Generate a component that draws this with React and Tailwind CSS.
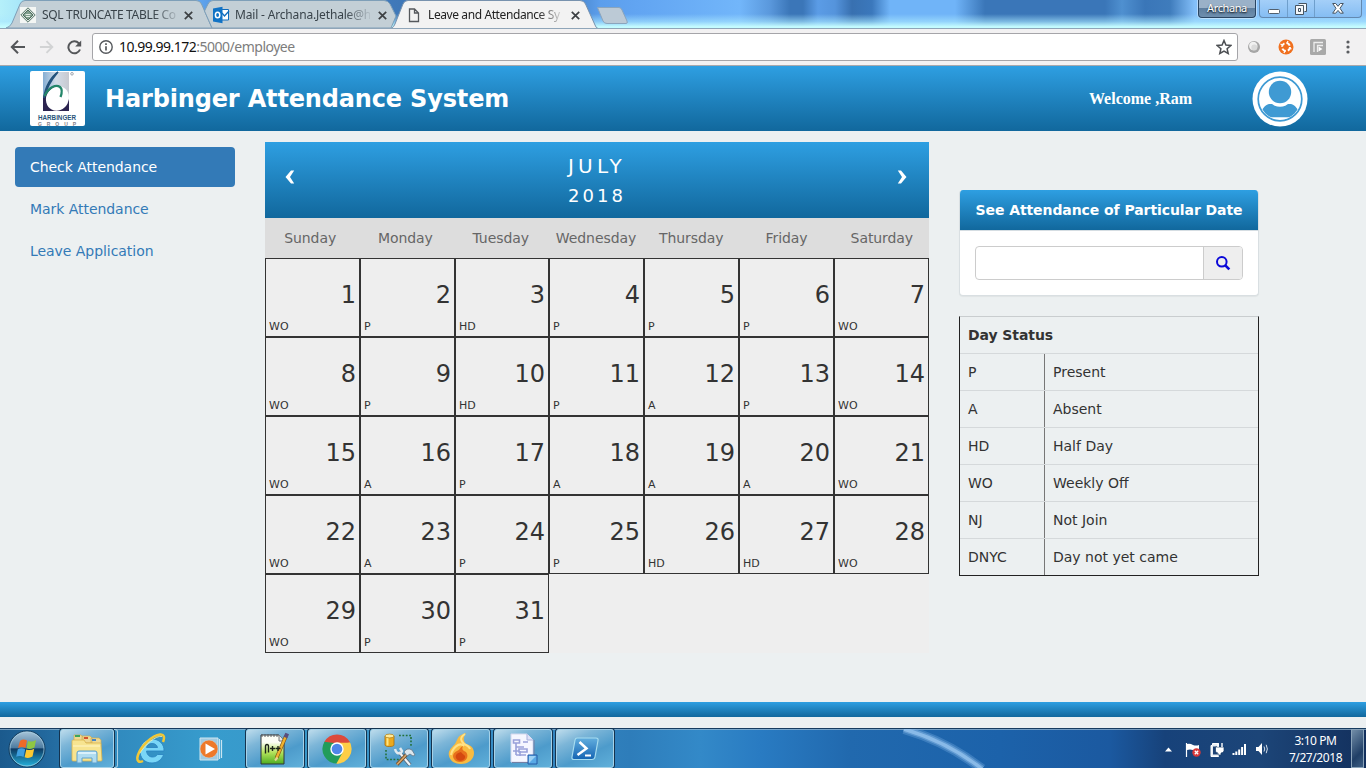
import React from "react";

const VERDANA = "font-['DejaVu_Sans',sans-serif]";

const WEEKDAYS = ["Sunday", "Monday", "Tuesday", "Wednesday", "Thursday", "Friday", "Saturday"];
const CODES = [
  "WO", "P", "HD", "P", "P", "P", "WO",
  "WO", "P", "HD", "P", "A", "P", "WO",
  "WO", "A", "P", "A", "A", "A", "WO",
  "WO", "A", "P", "P", "HD", "HD", "WO",
  "WO", "P", "P",
];
const STATUSES = [
  ["P", "Present"],
  ["A", "Absent"],
  ["HD", "Half Day"],
  ["WO", "Weekly Off"],
  ["NJ", "Not Join"],
  ["DNYC", "Day not yet came"],
];

function TabClose() {
  return (
    <svg className="size-[9px] shrink-0" viewBox="0 0 9 9">
      <path d="M.8.8 8.2 8.2M8.2.8.8 8.2" stroke="#3c4043" strokeWidth="1.7" />
    </svg>
  );
}

function Tab({ width, path, w, fill, stroke, children }) {
  return (
    <div className={`relative isolate h-[28px] shrink-0 ${width}`}>
      <svg className="absolute inset-0 -z-10" width={w} height="28" viewBox={`0 0 ${w} 28`}>
        <path d={path} fill={fill} stroke={stroke} />
      </svg>
      <div className="flex h-[29px] items-center pt-px">{children}</div>
    </div>
  );
}

function TabTitle({ className, children }) {
  return (
    <span
      className={`font-['Noto_Sans',sans-serif] text-[12px] leading-[18px] whitespace-nowrap [mask-image:linear-gradient(to_right,#000_82%,transparent_102%)] ${className}`}
    >
      {children}
    </span>
  );
}

function TitleBar() {
  return (
    <div className="relative isolate flex h-[29px] shrink-0 overflow-hidden bg-[linear-gradient(to_right,#b5f0fa_0,#8fd4f6_60px,#6fb4f4_160px,#5fa4ee_200px,#4f90dc_225px,#3f78b8_400px,#3f78b8_560px,#5c9eec_600px,#62a5f2_640px,#72b6fa_740px,#5a98dc_770px,#3b76b8_790px,#3b76b8_803px,#5b9ce6_818px,#5594dc_835px,#3870b0_852px,#3b78bc_872px,#70b4f8_890px,#70b4f8_955px,#3a76b8_985px,#3a76b8_1105px,#4f90d0_1122px,#3a76b8_1145px,#3f7cbc_1170px,#84c0fa_1195px,#8ac4fc_1366px)]">
      <div className="absolute inset-x-0 bottom-0 -z-20 h-[15px] bg-[linear-gradient(to_bottom,rgba(170,225,255,0),rgba(170,232,255,0.6)_50%,#c4fcff_85%)]" />
      <div className="w-[6px] shrink-0" />
      <Tab width="w-[206px]" w={206} path="M0 28 Q4 27 6 23 L14 4 Q15.500 .5 19 .5 H190 Q194 .5 195.500 4 L206 28Z" fill="#c3cfd6" stroke="#7e9fb8">
        <svg className="ml-[14px] size-4 shrink-0" viewBox="0 0 16 16">
          <path fill="#f3f6f4" d="M0 0h16v16H0z" />
          <path d="M8 .8 15.200 8 8 15.200.8 8Z" fill="#dce4df" stroke="#57776a" />
          <path d="M8 3 13 8 8 13 3 8Z" fill="#809e8d" stroke="#4d6e5e" />
          <path d="M5.500 7.500h5M6 9.500h4" stroke="#e2ece5" />
        </svg>
        <TabTitle className="ml-[6px] w-[136px] tracking-[-0.32px] text-[#39434a]">SQL TRUNCATE TABLE Co</TabTitle>
        <span className="ml-[6px] flex"><TabClose /></span>
      </Tab>
      <Tab width="-ml-[9px] w-[197px]" w={197} path="M9 28 L1.500 11 L5 4 Q6.500 .5 10 .5 H181 Q185 .5 187 4 L193 16 L188 28Z" fill="#c3cfd6" stroke="#7e9fb8">
        <svg className="ml-[9px] size-[18px] shrink-0" viewBox="0 0 18 18">
          <path d="M8 3.500h8.500v10.500H8z" fill="#fff" stroke="#0f6cbd" />
          <path d="m10 7 2.500 3 4.500-5" fill="none" stroke="#0f6cbd" strokeWidth="1.300" />
          <path d="M1 2.500 10.500 .8v16.400L1 15.500Z" fill="#1173c5" />
          <ellipse cx="5.600" cy="9" rx="2.200" ry="2.800" fill="none" stroke="#fff" strokeWidth="1.500" />
        </svg>
        <TabTitle className="ml-[5px] w-[135px] tracking-[-0.17px] text-[#39434a]">Mail - Archana.Jethale@h</TabTitle>
        <span className="ml-[8px] flex"><TabClose /></span>
      </Tab>
      <Tab width="-ml-[9px] w-[207px]" w={207} path="M0 28.500 Q3 27 4 24 L12 4 Q13.500 .5 17 .5 H189 Q193 .5 194.500 4 L204 25 Q205 28 207 28.500Z" fill="#f2f2f2" stroke="#7892ae">
        <svg className="ml-[17px] h-[15px] w-[12px] shrink-0" viewBox="0 0 12 15">
          <path d="M1.500 1h5l4 4v8.500h-9ZM6.500 1v4h4" fill="none" stroke="#55585c" strokeWidth="1.300" />
        </svg>
        <TabTitle className="ml-[8px] w-[134px] tracking-[-0.4px] text-[#222]">Leave and Attendance Sy</TabTitle>
        <span className="ml-[9px] flex"><TabClose /></span>
      </Tab>
      <svg className="-ml-[3px] h-[28px] w-[36px] shrink-0" viewBox="0 0 36 28">
        <path d="M2.500 7.500H24Q26 7.500 27 10L32 21Q33 23.500 31 23.500H12Q9 23.500 8 21Z" fill="#bccad6" stroke="#8ba5bd" />
      </svg>
      <div className="ml-auto flex h-[18px] pr-[4px]">
        <div className="flex h-[18px] w-[58px] items-center justify-center rounded-b-[4px] border border-t-0 border-[#2a4562] bg-[linear-gradient(#9ab1c8_0_45%,#5f7f9f_50%,#6e8fae)] font-['Noto_Sans',sans-serif] text-[11px] tracking-[-0.4px] text-white ring-1 ring-white/40 [text-shadow:0_1px_2px_#000]">
          Archana
        </div>
        <div className="ml-[3px] flex h-[18px] w-[103px] rounded-b-[4px] border border-t-0 border-[#6389b0] bg-linear-to-b from-[#a4cff8] to-[#85bdf3]">
          <div className="flex w-[28px] items-center justify-center border-r border-[#6f9fcc]">
            <svg className="h-[16px] w-[14px]" viewBox="0 0 14 16"><rect x="1.500" y="8.500" width="11" height="4" rx="1" fill="#fff" stroke="#52606e" /></svg>
          </div>
          <div className="flex w-[27px] items-center justify-center border-r border-[#6f9fcc]">
            <svg className="size-[12px]" viewBox="0 0 12 12">
              <path d="M3.500.5h8v8h-2M.5 2.500h8v9h-8ZM3.500 5.500h2v3h-2Z" fill="#f4f8fc" stroke="#465462" />
            </svg>
          </div>
          <div className="flex flex-1 items-center justify-center">
            <svg className="h-[11px] w-[12px]" viewBox="0 0 12 11">
              <path d="M.7.500h3l2.300 2.800L8.300.5h3L8 5.300l3.300 4.900h-3L6 7.400l-2.300 2.800h-3L4 5.300Z" fill="#fff" stroke="#465462" />
            </svg>
          </div>
        </div>
      </div>
      <div className="absolute inset-x-0 bottom-0 -z-10 h-px bg-[#8fa5b8]" />
    </div>
  );
}

function Toolbar() {
  return (
    <div className="flex h-[37px] shrink-0 items-center border-b border-[#a8a8ac] bg-[#f2f1f2]">
      <svg className="ml-[10px] h-[16px] w-[16px]" viewBox="0 0 16 16">
        <path d="M15 8H2.500M8 1.800 1.800 8 8 14.200" fill="none" stroke="#545659" strokeWidth="2" />
      </svg>
      <svg className="ml-[13px] h-[16px] w-[15px]" viewBox="0 0 16 16">
        <path d="M1 8h12.500M8 1.800 14.200 8 8 14.200" fill="none" stroke="#d2d3d4" strokeWidth="2" />
      </svg>
      <svg className="ml-[13px] size-[15px]" viewBox="0 0 15 15">
        <path d="M13 9.500A6 6 0 1 1 11.800 3.200L13 4.500" fill="none" stroke="#545659" strokeWidth="2" />
        <path d="M14.200.5V6.500H8.200Z" fill="#545659" />
      </svg>
      <div className="ml-[10px] flex h-[28px] w-[1146px] items-center rounded-[3px] border border-[#a5a5a9] bg-white">
        <svg className="ml-[6px] size-[14px]" viewBox="0 0 14 14">
          <circle cx="7" cy="7" r="6.200" fill="none" stroke="#55585c" strokeWidth="1.400" />
          <path d="M7 6.200V10.600M7 3.300V5" stroke="#55585c" strokeWidth="1.700" />
        </svg>
        <span className="ml-[6px] font-['Noto_Sans',sans-serif] text-[14px] leading-5 tracking-[-0.5px] text-[#111]">
          10.99.99.172<span className="text-[#7d7d7d]">:5000/employee</span>
        </span>
        <svg className="mr-[5px] ml-auto size-[16px]" viewBox="0 0 16 16">
          <path d="m8 1.500 1.900 4.600 4.900.4-3.700 3.200 1.100 4.800L8 12l-4.200 2.500 1.100-4.800L1.200 6.500l4.900-.4Z" fill="none" stroke="#4c4f53" strokeWidth="1.500" />
        </svg>
      </div>
      <svg className="ml-[9px] size-[14px]" viewBox="0 0 14 14">
        <circle cx="7" cy="7" r="6" fill="#a6a6a6" />
        <circle cx="6.300" cy="6" r="4.200" fill="#f1f1f1" />
        <circle cx="7.300" cy="7.400" r="3" fill="#dadada" />
      </svg>
      <svg className="ml-[17px] size-[16px]" viewBox="0 0 16 16">
        <circle cx="8" cy="8" r="7.500" fill="#f0701f" />
        <circle cx="8" cy="8" r="4" fill="none" stroke="#fff" strokeWidth="2" strokeDasharray="4.200 2.080" />
        <path d="m2.500 5 2 1M10 2l-1 2M13.500 10l-2-.8M6 14l.8-2" stroke="#fff" strokeWidth="1.200" />
      </svg>
      <svg className="ml-[16px] size-[16px]" viewBox="0 0 16 16">
        <rect width="16" height="16" rx="1.500" fill="#a9a9a9" />
        <path d="M4 13V3.500h9M7.500 13V6.500h5.500" fill="none" stroke="#eee" strokeWidth="1.300" />
        <path d="M8.500 7.500 12.500 10l-4 2.500Z" fill="#fff" />
      </svg>
      <svg className="ml-[20px] h-[14px] w-[4px]" viewBox="0 0 4 14" fill="#5a5c60">
        <circle cx="2" cy="2" r="1.600" /><circle cx="2" cy="7" r="1.600" /><circle cx="2" cy="12" r="1.600" />
      </svg>
    </div>
  );
}

function Logo() {
  return (
    <svg className="ml-[30px] h-[55px] w-[55px] rounded-[2px]" viewBox="0 0 55 55">
      <defs>
        <linearGradient id="logo-bg" x1="0" y1="0" x2="1" y2="0">
          <stop offset="0" stopColor="#86aed3" /><stop offset=".5" stopColor="#d3dde8" /><stop offset="1" stopColor="#c7c9d0" />
        </linearGradient>
      </defs>
      <path fill="#fff" d="M0 0h55v55H0z" />
      <path fill="url(#logo-bg)" d="M13 1h26v39H13z" />
      <path d="M13 40V27C14 21 18 17 24 16L39 28V40Z" fill="#2c2450" />
      <ellipse cx="27.500" cy="27.500" rx="11.300" ry="12.500" fill="#fff" transform="rotate(28 27.500 27.500)" />
      <path d="M28 1C21 6 15 16 14 27C16 18 22 8 28 1Z" fill="#24537c" stroke="#24537c" strokeWidth="1.600" />
      <path d="M14.500 25C19 16 26 13 30 16C32.500 18 32 22 30.500 26" fill="none" stroke="#24866a" strokeWidth="2.300" />
      <circle cx="42" cy="2.800" r="1.300" fill="none" stroke="#7a8290" strokeWidth=".7" />
      <text x="8" y="48.500" textLength="38" lengthAdjust="spacingAndGlyphs" fontFamily="Liberation Sans, sans-serif" fontSize="7" fontWeight="700" fill="#285379">HARBINGER</text>
      <text x="8" y="54.800" textLength="38" fontFamily="Liberation Sans, sans-serif" fontSize="5" fontWeight="700" fill="#858087">GROUP</text>
    </svg>
  );
}

function Avatar() {
  return (
    <svg className="size-[56px]" viewBox="0 0 56 56">
      <defs><clipPath id="avatar-disc"><circle cx="28" cy="28" r="20.500" /></clipPath></defs>
      <circle cx="28" cy="28" r="27.500" fill="#fff" />
      <circle cx="28" cy="28" r="21.800" fill="none" stroke="#3f9ad3" strokeWidth="1.700" />
      <g clipPath="url(#avatar-disc)">
        <path d="M7 44C10 38 13 34 17 33H39C43 34 46 38 49 44V48H37V46.500H19V48H7Z" fill="#3f9ad3" />
        <ellipse cx="28" cy="21.500" rx="13.800" ry="14.300" fill="#fff" />
        <path d="M18 47.500h20" stroke="#fff" strokeWidth="1.800" />
      </g>
      <circle cx="28" cy="21" r="11.200" fill="#3f9ad3" />
    </svg>
  );
}

function Header() {
  return (
    <header className="flex h-[65px] shrink-0 items-center bg-linear-to-b from-[#2e9fe2] to-[#11689d]">
      <Logo />
      <h1 className="ml-5 text-[24px] leading-8 font-bold tracking-[-0.16px] text-white">Harbinger Attendance System</h1>
      <span className="ml-auto w-[104px] font-['Liberation_Serif',serif] text-[16px] leading-6 font-bold whitespace-nowrap text-white">Welcome ,Ram</span>
      <span className="mr-[58px] ml-[59px]"><Avatar /></span>
    </header>
  );
}

function Chevron({ d }) {
  return (
    <svg className="h-[18px] w-[12px]" viewBox="0 0 12 18">
      <path d={d} fill="#fff" />
    </svg>
  );
}

function Calendar() {
  return (
    <section className="h-[511px] w-[664px] shrink-0 bg-[#eeeeee]">
      <div className="flex h-[76px] items-center justify-between bg-linear-to-b from-[#2e9fe2] to-[#11689d] pr-[21px] pl-[19px] text-white">
        <span className="pb-[6px]"><Chevron d="M7 2.500h3.200L6 9l4.200 6.500H7L1.500 9Z" /></span>
        <div className="pt-[2px] pl-[2px] text-center">
          <div className="text-[20px] leading-[29px] tracking-[4.200px]">JULY</div>
          <div className="text-[18px] leading-[29px] tracking-[3px]">2018</div>
        </div>
        <span className="pb-[6px]"><Chevron d="M5 2.500H1.800L6 9l-4.200 6.500H5L10.500 9Z" /></span>
      </div>
      <div className="h-[40px] bg-[#dddddd]">
        <div className="-mr-[3px] grid h-full grid-cols-7 items-center text-center text-[14px] text-[#666]">
          {WEEKDAYS.map((day) => (
            <span key={day} className="-ml-[5px] tracking-[-0.08px]">{day}</span>
          ))}
        </div>
      </div>
      <div className="grid grid-cols-[95px_95px_94px_95px_95px_95px_95px]">
        {CODES.map((code, i) => (
          <div key={i} className="flex h-[79px] flex-col border border-[#333] pt-[16px] text-[#333]">
            <div className="pr-[3px] text-right text-[24px] leading-[41px]">{i + 1}</div>
            <div className="pl-[3px] text-[11px] leading-[22px]">{code}</div>
          </div>
        ))}
      </div>
    </section>
  );
}

function SearchPanel() {
  return (
    <div className="overflow-hidden rounded-[4px] border border-t-0 border-[#d9dfe2] bg-white shadow-[0_1px_1px_rgba(0,0,0,0.05)]">
      <div className="flex h-[41px] items-center justify-center border-b border-[#d5dde2] bg-linear-to-b from-[#2e9fe2] to-[#11689d] text-[14px] font-bold tracking-[-0.08px] whitespace-nowrap text-white">
        See Attendance of Particular Date
      </div>
      <div className="p-[15px]">
        <div className="flex h-[34px] overflow-hidden rounded-[4px] border border-[#ccc] bg-white">
          <div className="flex-1" />
          <div className="flex w-[39px] items-center justify-center border-l border-[#ccc] bg-[#eee]">
            <svg className="size-[16px]" viewBox="0 0 16 16" fill="none" stroke="#0b08d8">
              <circle cx="6.800" cy="6.800" r="4.800" strokeWidth="2" />
              <path d="m10.300 10.300 4 4" strokeWidth="2.600" />
            </svg>
          </div>
        </div>
      </div>
    </div>
  );
}

function StatusTable() {
  return (
    <div className="mt-[20px] h-[260px] border border-[#222] border-t-[#c9cdcf] text-[14px] text-[#333]">
      <div className="flex h-[36px] items-center pl-[8px] font-bold tracking-[-0.08px]">Day Status</div>
      {STATUSES.map(([code, label]) => (
        <div key={code} className="flex h-[37px] border-t border-[#d5d9db]">
          <div className="flex w-[85px] items-center border-r border-[#777] pl-[8px]">{code}</div>
          <div className="flex items-center pl-[8px]">{label}</div>
        </div>
      ))}
    </div>
  );
}

function TaskButton({ className = "", children }) {
  return (
    <div className={`flex h-[39px] shrink-0 items-center justify-center rounded-[3px] border border-[#a6d2e8] bg-[linear-gradient(155deg,#bddcec_0,#7db6d8_28%,#4d9bcb_62%,#60b0da)] shadow-[0_0_0_1px_#14334f] ${className}`}>
      {children}
    </div>
  );
}

function StartOrb() {
  return (
    <svg className="ml-[8px] size-[38px] shrink-0" viewBox="0 0 38 38">
      <defs>
        <linearGradient id="orb" x1="0" y1="0" x2="0" y2="1">
          <stop offset="0" stopColor="#a9c6da" /><stop offset=".46" stopColor="#4f7da1" /><stop offset=".5" stopColor="#0d3b64" /><stop offset="1" stopColor="#25b5df" />
        </linearGradient>
      </defs>
      <circle cx="19" cy="19" r="18" fill="url(#orb)" stroke="#123b5c" />
      <circle cx="19" cy="19" r="17" fill="none" stroke="#a9d1e5" strokeOpacity=".7" />
      <path d="M12 11Q15 8.500 19 10.500L17.500 18Q14 16 10 18Z" fill="#ee6a28" />
      <path d="M20 11Q24 12.500 28 10L26.500 17.500Q22.500 20 18.500 18.200Z" fill="#8fc743" />
      <path d="M9.800 19.200Q13.500 17.500 17.200 19.200L15.500 27Q12 25 8.200 26.800Z" fill="#3e9fe0" />
      <path d="M18.300 19.500Q22.500 21 26.200 18.700L24.500 26.500Q20.500 29 16.600 27.200Z" fill="#fbc832" />
    </svg>
  );
}

function ExplorerIcon() {
  return (
    <svg className="h-[32px] w-[34px]" viewBox="0 0 34 32">
      <path d="M4 5V2h7l2 2v5H4ZM12 6V3h8l2 2v5H12ZM21 8V5h8l2 2v5H21Z" fill="#eed994" stroke="#cfae55" strokeWidth=".7" />
      <path d="M5 2h5v2H5Z" fill="#3ca55c" /><path d="M14 4h4v2h-4Z" fill="#d2532e" /><path d="M22 6h4v2h-4Z" fill="#4886c5" />
      <path d="M2 8q0-1 1-1h11l2 3h14q1 0 1 1l1 16q0 1-1 1H3q-1 0-1-1Z" fill="#f7e490" stroke="#d9b24d" strokeWidth=".8" />
      <path d="M3 13h27" stroke="#fff6c8" />
      <path d="M7 30V20q0-2 2-2h16q2 0 2 2v10h-5v-5H12v5Z" fill="#b0dcf0" stroke="#5da1cf" />
      <path d="M8 20h18" stroke="#e9f8ff" strokeWidth="1.500" />
    </svg>
  );
}

function IEIcon() {
  return (
    <svg className="h-[34px] w-[34px]" viewBox="0 0 34 34">
      <path d="M30 19H12.500c.5 4 3 6 6 6 2.500 0 4-1 5-2.500h6.200C27.500 28 23.500 31 18 31 10.500 31 6 26 6 19S11 7 18 7s12.500 5 12 12ZM12.500 15.500h11C23 13 21 11.500 18 11.500s-5 1.500-5.500 4Z" fill="#79d6f7" stroke="#2b86c2" strokeWidth=".9" fillRule="evenodd" />
      <path d="M29 10C31 5 30 2 26 2.500 18 3.500 7 14 4 23c-2 6 1 8 5 6" fill="none" stroke="#f0c737" strokeWidth="2.500" />
      <path d="M28 4.500C22 3 11 13 6 21" fill="none" stroke="#fff1a2" strokeWidth=".8" />
    </svg>
  );
}

function MediaIcon() {
  return (
    <svg className="h-[26px] w-[26px]" viewBox="0 0 26 26">
      <path d="M2 2h18v22H2z" fill="#9fcae2" stroke="#cfe6f0" />
      <path d="M21.500 3v20M23.500 4v18" stroke="#c9e5f2" strokeWidth="1.200" />
      <circle cx="11" cy="13" r="9" fill="#ee792a" stroke="#c9d2d5" strokeWidth=".6" />
      <path d="M7.500 7.500 17 13l-9.500 5.500Z" fill="#fff" />
    </svg>
  );
}

function NotepadIcon() {
  return (
    <svg className="h-[34px] w-[32px]" viewBox="0 0 32 34">
      <defs><linearGradient id="npp" x1="0" y1="0" x2="0" y2="1"><stop offset=".25" stopColor="#fcfdf5" /><stop offset=".6" stopColor="#b4e35c" /><stop offset="1" stopColor="#4ead20" /></linearGradient></defs>
      <path d="M2 3h18l5 6v23H2Z" fill="url(#npp)" stroke="#30363a" />
      <path d="M20 3v6h5" fill="#e7e7e7" stroke="#777" />
      <path d="M3 2v3M6 2v3M9 2v3M12 2v3M15 2v3M18 2v3" stroke="#5a5f63" />
      <path d="M27 4 17.500 26" stroke="#7b4f18" strokeWidth="3.600" /><path d="M27 4 17.500 26" stroke="#efb22f" strokeWidth="2.400" />
      <path d="m28.200 1.500-1.800 4" stroke="#594e7d" strokeWidth="4" /><path d="m18.500 25.500-2.500 3" stroke="#e4cf95" strokeWidth="2" />
      <path d="M6.500 21.500V14.500q0-2 1.500-2t1.500 2v6M13.500 14v5M11 16.500h5M19 14v5M16.500 16.500h5" fill="none" stroke="#1c2518" strokeWidth="1.400" />
    </svg>
  );
}

function ChromeIcon() {
  return (
    <svg className="size-[30px]" viewBox="0 0 30 30">
      <path d="M15 15 2.440 7.750A14.500 14.500 0 0 1 27.560 7.750Z" fill="#dc4a3c" />
      <path d="M15 15 27.560 7.750A14.500 14.500 0 0 1 15 29.500Z" fill="#fdce47" />
      <path d="M15 15V29.500A14.500 14.500 0 0 1 2.440 7.750Z" fill="#229c5b" />
      <path d="M15 8.400H27.900L28.500 10.500 21.500 15Z" fill="#fdce47" />
      <path d="M2.400 7.800 9.300 18.300 15 15 12 9Z" fill="#229c5b" />
      <path d="M15 8.400H27.900Q27.700 8 27 7L15 5Z" fill="#dc4a3c" />
      <path d="M20.700 18.300 14 29.500 17 29.400 23 20Z" fill="#fdce47" />
      <path d="M10 17 14.500 29.500 20.700 18.300Z" fill="#229c5b" />
      <circle cx="15" cy="15" r="6.700" fill="#fff" /><circle cx="15" cy="15" r="5.300" fill="#4f86e8" />
    </svg>
  );
}

function DatabaseToolsIcon() {
  return (
    <svg className="h-[34px] w-[34px]" viewBox="0 0 34 34">
      <path d="M17 3.500h12V14M4 18v9.500h13" fill="none" stroke="#23703a" strokeWidth="1.600" strokeDasharray="1.800 1.600" />
      <path d="M3 4v9c0 2 9 2 9 0V4Z" fill="#eda91b" stroke="#a86c08" strokeWidth=".8" /><path d="M5.500 5v8.500" stroke="#ffe483" strokeWidth="2" />
      <ellipse cx="7.500" cy="4" rx="4.500" ry="1.900" fill="#ffeb9a" stroke="#ad7911" strokeWidth=".7" />
      <path d="M17 20 28 33" stroke="#566879" strokeWidth="3.800" /><path d="M17 20 28 33" stroke="#eef3f7" strokeWidth="2.200" />
      <path d="M13 17c1 4 3 5 6 4l1-2-2-3" fill="none" stroke="#e1e9ef" strokeWidth="2.500" />
      <path d="M27 20 15 32.500" stroke="#78502a" strokeWidth="3.400" /><path d="M27 20 15 32.500" stroke="#d9a76b" strokeWidth="1.700" />
      <path d="M22 20q3-5 8-2l3 5-2 1-3-2-3 2Z" fill="#dce6ed" stroke="#647786" strokeWidth=".8" />
    </svg>
  );
}

function FlameIcon() {
  return (
    <svg className="h-[34px] w-[28px]" viewBox="0 0 28 34">
      <path d="M19 1C8 4 12 9 6 14 3 17 1 20 2 24c1 5 6 8 12 8 8 0 13-5 13-11 0-5-3-8-8-9-3-3-3-7 0-11Z" fill="#f8bb41" />
      <path d="M18 2C12 6 14 9 17 12q5 2 6 5M17 14C12 9 5 17 4 23" fill="none" stroke="#ffe185" strokeWidth="2" />
      <path d="M16 14c-3 1-3 4-6 5-4 2-5 5-3 8 2 4 11 4 13-1 1-3 0-6-3-7-2-1-2-3-1-5Z" fill="#e8701c" />
      <path d="M14 20c-4 1-6 3-5 6s7 4 9 0c1-3-2-3-4-6Z" fill="#d44810" />
    </svg>
  );
}

function DiagramIcon() {
  return (
    <svg className="h-[34px] w-[30px]" viewBox="0 0 30 34">
      <path d="M3 2h16l6 6v22H3Z" fill="#f5f6ff" stroke="#d5d8ee" /><path d="M4 30.500h22V8" fill="none" stroke="#727fa4" />
      <path d="M19 2v6h6" fill="#dfe2f8" stroke="#a9b1dc" />
      <path d="M5.500 8h6v3h-6ZM15 10h5M8 11v12M8 15h8M5 19h6M11 17h8v3h-8ZM8 23h10M12 24v-5" fill="none" stroke="#99a1da" strokeWidth="1.600" />
      <path d="M20 23h9v9h-9z" fill="#58a9e6" stroke="#245ba7" /><path d="M21 24h7l-7 7Z" fill="#9ed2f4" />
    </svg>
  );
}

function PowerShellIcon() {
  return (
    <svg className="h-[26px] w-[30px]" viewBox="0 0 30 26">
      <defs><linearGradient id="ps" x1="0" y1="0" x2="0" y2="1"><stop offset="0" stopColor="#62aede" /><stop offset="1" stopColor="#1464b3" /></linearGradient></defs>
      <path d="M7 2h19q2.500 0 2 2.500L25 21q-.5 2.500-3 2.500H4q-2.500 0-2-2.500L5 4q.4-2 2-2Z" fill="url(#ps)" stroke="#a6dcef" strokeWidth="1.200" />
      <path d="M9.500 6 16.500 12.500 7.500 19" fill="none" stroke="#fff" strokeWidth="2.500" /><path d="M15 19.500h6" stroke="#fff" strokeWidth="2" />
    </svg>
  );
}

function SystemTray() {
  return (
    <div className="ml-auto flex h-full shrink-0 items-center">
      <svg className="h-[16px] w-[106px]" viewBox="0 0 106 16" fill="#fff">
        <path d="M0 10.500 3.500 6.500 7 10.500Z" />
        <path d="M21.500 2v14" stroke="#fff" strokeWidth="1.200" /><path d="M22 3q3-1 6 1 3 1 6 0v6q-3 1-6-1-3-1-6 0Z" />
        <circle cx="31.500" cy="11.500" r="4.200" fill="#d8383a" /><path d="m29.800 9.800 3.400 3.400M33.200 9.800l-3.400 3.400" stroke="#fff" strokeWidth="1.300" />
        <path d="M47.500 2.500h6v13h-7.500v-11h1.500Z" fill="#e9eef3" stroke="#fff" /><path d="M48 5.500h4.500v8H48z" fill="#1c4275" />
        <path d="M50.500 6h8.500v4q-1 2-3 2v2h-3v-2q-2.500 0-2.500-2Z" stroke="#163966" strokeWidth=".7" /><path d="M53 2v4M57 2v4" stroke="#fff" strokeWidth="1.400" />
        <path d="M67.500 12h2v2h-2zM70.300 10.500h2V14h-2zM73.200 8.500h2V14h-2zM76.100 6h2v8h-2zM79 3h2v11h-2z" />
        <path d="M91 6h2.500L97 2v12l-3.500-4H91Z" /><path d="M99 5.500q1.500 2.500 0 5M101.200 3.800q2.300 4.200 0 8.400" fill="none" stroke="#d6e0eb" />
      </svg>
      <div className="ml-[9px] w-[71px] text-center font-['Noto_Sans',sans-serif] text-[12px] leading-[17px] tracking-[-0.42px] text-white">
        <div>3:10 PM</div>
        <div>7/27/2018</div>
      </div>
      <div className="mr-[2px] h-[39px] w-[13px] border border-[#8aa3b9] bg-[linear-gradient(135deg,#718da7,#203f66_65%,#3d5d82)]" />
    </div>
  );
}

function Taskbar() {
  return (
    <div className="relative isolate flex h-[40px] shrink-0 items-center border-t border-[#173b5f] bg-[linear-gradient(to_right,#1b5a8d_0,#22689d_45px,#318bbf_120px,#379ccd_210px,#3a95c8_360px,#358bc5_500px,#2e7dba_630px,#3389c8_700px,#297bc2_760px,#2169ae_850px,#1c62aa_1000px,#1b59a0_1110px,#17427a_1165px,#1c4578_1260px,#13305d_1366px)]">
      <svg className="absolute inset-0 -z-10" width="1366" height="39" viewBox="0 0 1366 39">
        <path d="M0 .5H1366" stroke="#9bbbd2" strokeOpacity=".7" />
        <path d="M904 0Q948 13 982 40" fill="none" stroke="#82b6e7" strokeOpacity=".3" strokeWidth="10" />
        <path d="M904 0Q948 13 982 40" fill="none" stroke="#8bbcec" strokeOpacity=".45" strokeWidth="6.500" />
        <path d="M904 0Q948 13 982 40" fill="none" stroke="#9bc8f1" strokeOpacity=".7" strokeWidth="3.500" />
      </svg>
      <StartOrb />
      <TaskButton className="ml-[14px] w-[54px]"><ExplorerIcon /></TaskButton>
      <div className="h-[39px] w-[4px] rounded-r-[3px] border-y border-r border-[#a8cfe2]" />
      <div className="ml-[16px]"><IEIcon /></div>
      <div className="ml-[30px]"><MediaIcon /></div>
      <div className="ml-[22px] flex gap-[4px]">
        <TaskButton className="w-[58px]"><NotepadIcon /></TaskButton>
        <TaskButton className="w-[58px]"><ChromeIcon /></TaskButton>
        <TaskButton className="w-[58px]"><DatabaseToolsIcon /></TaskButton>
        <TaskButton className="w-[58px]"><FlameIcon /></TaskButton>
        <TaskButton className="w-[58px]"><DiagramIcon /></TaskButton>
        <TaskButton className="w-[58px]"><PowerShellIcon /></TaskButton>
      </div>
      <SystemTray />
    </div>
  );
}

export default function App() {
  return (
    <div className={`flex h-[768px] w-[1366px] flex-col overflow-hidden bg-[#ecf0f1] ${VERDANA}`}>
      <TitleBar />
      <Toolbar />
      <Header />
      <main className="flex h-[571px] shrink-0">
        <nav className="flex w-[265px] shrink-0 flex-col gap-[2px] pt-[16px] pr-[30px] pl-[15px] text-[14px] leading-5 tracking-[-0.05px] text-[#337ab7]">
          <a className="rounded-[4px] bg-[#337ab7] px-[15px] py-[10px] text-white">Check Attendance</a>
          <a className="px-[15px] py-[10px]">Mark Attendance</a>
          <a className="px-[15px] py-[10px]">Leave Application</a>
        </nav>
        <div className="pt-[11px]"><Calendar /></div>
        <aside className="ml-[30px] w-[300px] shrink-0 pt-[59px]">
          <SearchPanel />
          <StatusTable />
        </aside>
      </main>
      <div className="h-[15px] shrink-0 bg-linear-to-b from-[#2e9fe2] to-[#11689d]" />
      <div className="h-[11px] shrink-0" />
      <Taskbar />
    </div>
  );
}
